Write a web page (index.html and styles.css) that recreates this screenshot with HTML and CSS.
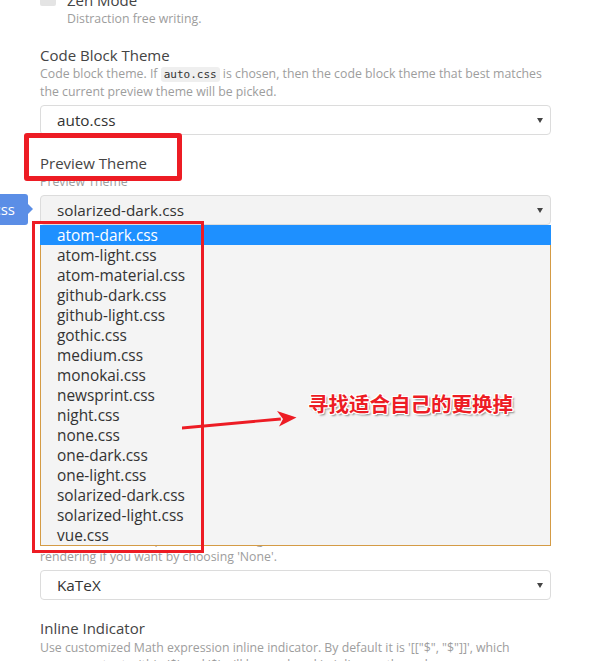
FILE: index.html
```html
<!DOCTYPE html>
<html>
<head>
<meta charset="utf-8">
<link rel="stylesheet" href="styles.css">
</head>
<body>
<div class="screen">
  <div class="page">
    <div class="setting check-setting">
      <span class="checkbox"></span>
      <div>
        <div class="title">Zen Mode</div>
        <div class="desc">Distraction free writing.</div>
      </div>
    </div>

    <div class="setting">
      <div class="title">Code Block Theme</div>
      <div class="desc">Code block theme. If <code>auto.css</code> is chosen, then the code block theme that best matches<br>the current preview theme will be picked.</div>
      <div class="select"><span>auto.css</span><i class="caret"></i></div>
    </div>

    <div class="setting">
      <div class="title">Preview Theme</div>
      <div class="desc">Preview Theme</div>
      <div class="select-wrap">
        <div class="select focused"><span>solarized-dark.css</span><i class="caret"></i></div>
        <ul class="dropdown">
          <li class="active">atom-dark.css</li>
          <li>atom-light.css</li>
          <li>atom-material.css</li>
          <li>github-dark.css</li>
          <li>github-light.css</li>
          <li>gothic.css</li>
          <li>medium.css</li>
          <li>monokai.css</li>
          <li>newsprint.css</li>
          <li>night.css</li>
          <li>none.css</li>
          <li>one-dark.css</li>
          <li>one-light.css</li>
          <li>solarized-dark.css</li>
          <li>solarized-light.css</li>
          <li>vue.css</li>
        </ul>
      </div>
    </div>

    <div class="setting">
      <div class="title">Revealjs Theme</div>
      <div class="desc">Revealjs Presentation Theme</div>
      <div class="select"><span>white.css</span><i class="caret"></i></div>
    </div>

    <div class="setting">
      <div class="title">Mermaid Theme</div>
      <div class="desc">Mermaid Theme</div>
      <div class="select"><span>mermaid.css</span><i class="caret"></i></div>
    </div>

    <div class="setting">
      <div class="title">Frontmatter Rendering Option</div>
      <div class="desc">Frontmatter rendering option</div>
      <div class="select"><span>none</span><i class="caret"></i></div>
    </div>

    <div class="setting math-setting">
      <div class="title">Math Rendering Option</div>
      <div class="desc">Choose the Math expression rendering method here. You can also disable math<br>rendering if you want by choosing 'None'.</div>
      <div class="select"><span>KaTeX</span><i class="caret"></i></div>
    </div>

    <div class="setting inline-setting">
      <div class="title">Inline Indicator</div>
      <div class="desc">Use customized Math expression inline indicator. By default it is '[["$", "$"]]', which<br>means content within '$' and '$' will be rendered in inline math mode.</div>
    </div>
  </div>

  <div class="tag">theme.css</div>
  <div class="mark mark-title"></div>
  <div class="mark mark-list"></div>
  <svg class="arrow" width="591" height="661" viewBox="0 0 591 661">
    <polygon points="182,426.6 182,429.4 281,420.4 280.6,417.4" fill="#ed1c24"/>
    <polygon points="277,411 296.5,417.6 279,426.5 283,419" fill="#ed1c24"/>
  </svg>
  <div class="note">寻找适合自己的更换掉</div>
</div>
</body>
</html>
```

FILE: styles.css
```css
* { box-sizing: border-box; }

html, body {
  margin: 0;
  padding: 0;
  background: #fff;
}

.screen {
  position: relative;
  width: 591px;
  height: 661px;
  overflow: hidden;
  font-family: "Open Sans", "Noto Sans", sans-serif;
}

.page {
  margin-top: -10px;
  padding-left: 40px;
  width: 551px;
  display: flex;
  flex-direction: column;
  gap: 18px;
}

.math-setting {
  margin-top: -2px;
}

.check-setting {
  display: flex;
  gap: 11px;
}

.checkbox {
  width: 16px;
  height: 16px;
  border-radius: 2px;
  background: #e4e4e4;
  flex: none;
}

.title {
  font-size: 15px;
  line-height: 20px;
  color: #444;
}

.desc {
  font-size: 12.3px;
  line-height: 17px;
  color: #9d9d9d;
}

.inline-setting .desc {
  margin-top: 1px;
}

.desc code {
  font-family: "DejaVu Sans Mono", "Liberation Mono", monospace;
  font-size: 11px;
  color: #333;
  background: #efefef;
  border-radius: 3px;
  padding: 1px 3px;
}

.select {
  margin-top: 5px;
  height: 30px;
  border: 1px solid #dcdcdc;
  border-radius: 4px;
  background: #fff;
  display: flex;
  align-items: center;
  justify-content: space-between;
  padding: 0 7px 0 16px;
  font-size: 15.3px;
  color: #333;
}

.select.focused {
  background: #f3f3f3;
}

.caret {
  width: 0;
  height: 0;
  border-left: 3px solid transparent;
  border-right: 3px solid transparent;
  border-top: 5px solid #444;
}

.select-wrap {
  position: relative;
}

.dropdown {
  position: absolute;
  left: 0;
  right: 0;
  top: 100%;
  margin: 0;
  padding: 0;
  list-style: none;
  background: #f4f4f4;
  border: 1px solid #d49b45;
  border-top: none;
  z-index: 2;
}

.dropdown li {
  height: 20px;
  line-height: 22px;
  overflow: hidden;
  padding-left: 16px;
  font-size: 15.4px;
  color: #333;
}

.dropdown li.active {
  background: #1e90ff;
  color: #fff;
  margin: 0 -1px;
  padding-left: 17px;
}

.tag {
  position: absolute;
  left: -60px;
  top: 194px;
  width: 88px;
  height: 31px;
  border-radius: 3px;
  background: #5b8ee6;
  color: #fff;
  font-size: 15px;
  line-height: 31px;
  text-align: right;
  padding-right: 13px;
}

.tag::after {
  content: "";
  position: absolute;
  right: -5px;
  top: 10px;
  border-top: 5px solid transparent;
  border-bottom: 5px solid transparent;
  border-left: 5px solid #5b8ee6;
}

.mark {
  position: absolute;
  border-style: solid;
  border-color: #ed1c24;
  z-index: 3;
}

.mark-title {
  left: 24px;
  top: 133px;
  width: 158px;
  height: 48px;
  border-width: 5px;
  border-radius: 3px;
}

.mark-list {
  left: 32px;
  top: 221px;
  width: 172px;
  height: 332px;
  border-width: 3px;
}

.arrow {
  position: absolute;
  left: 0;
  top: 0;
  z-index: 4;
}

.note {
  position: absolute;
  left: 308px;
  top: 390px;
  z-index: 4;
  font-family: "Noto Sans CJK SC", sans-serif;
  font-weight: 700;
  font-size: 20.5px;
  line-height: 26px;
  color: #ed1c24;
  text-shadow:
    1px 0 0 #fff, -1px 0 0 #fff, 0 1px 0 #fff, 0 -1px 0 #fff,
    1px 1px 0 #fff, -1px -1px 0 #fff, 1px -1px 0 #fff, -1px 1px 0 #fff,
    2px 2px 2px rgba(0, 0, 0, 0.45);
}
```
